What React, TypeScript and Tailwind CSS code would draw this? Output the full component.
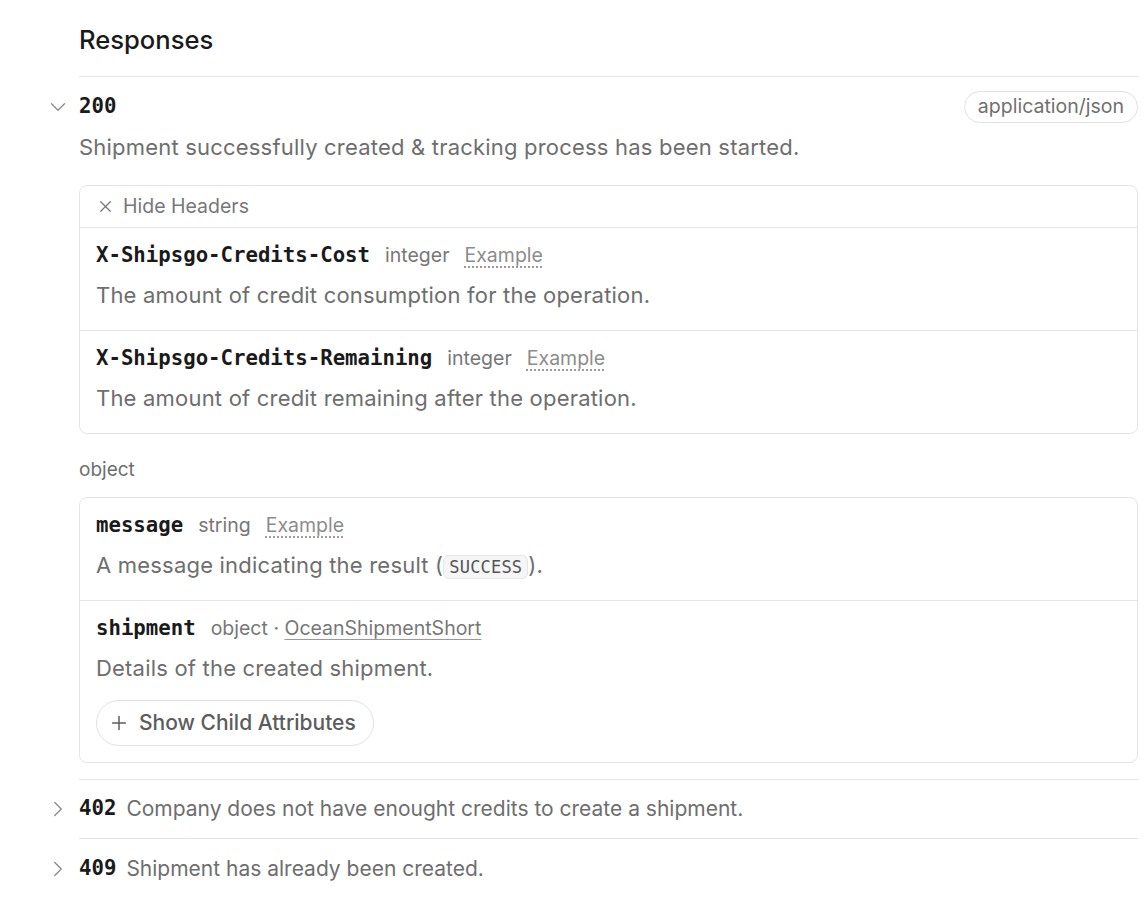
import { ChevronDown, ChevronRight, X, Plus } from "lucide-react";

const sans = "font-['Inter','Liberation_Sans',sans-serif]";
const mono = "font-['DejaVu_Sans_Mono','Liberation_Mono',monospace]";

type Field = {
  name: string;
  type: string;
  desc: React.ReactNode;
  link?: string;
  children?: boolean;
};

const headers: Field[] = [
  {
    name: "X-Shipsgo-Credits-Cost",
    type: "integer",
    desc: "The amount of credit consumption for the operation.",
  },
  {
    name: "X-Shipsgo-Credits-Remaining",
    type: "integer",
    desc: "The amount of credit remaining after the operation.",
  },
];

const body: Field[] = [
  {
    name: "message",
    type: "string",
    desc: (
      <>
        A message indicating the result (
        <code
          className={`${mono} inline-block align-baseline text-[17px] leading-[22px] text-[#555] bg-[#f6f6f6] border border-[#e6e6e6] rounded-md px-[5px]`}
        >
          SUCCESS
        </code>
        ).
      </>
    ),
  },
  {
    name: "shipment",
    type: "object",
    link: "OceanShipmentShort",
    desc: "Details of the created shipment.",
    children: true,
  },
];

function FieldRow({ field, last }: { field: Field; last: boolean }) {
  return (
    <div
      className={`px-4 pt-[14px] ${field.children ? "pb-4" : "pb-[21px]"} ${
        last ? "" : "border-b border-[#e5e5e5]"
      }`}
    >
      <div className="flex items-center gap-[15px] h-[28px]">
        <span className={`${mono} font-bold text-[20.7px] text-[#1a1a1a]`}>{field.name}</span>
        <span className="text-[19.5px] text-[#777]">
          {field.type}
          {field.link && (
            <>
              {" · "}
              <span className="underline underline-offset-4 decoration-[#999]">{field.link}</span>
            </>
          )}
        </span>
        {!field.link && (
          <span className="text-[19.5px] text-[#8c8c8c] underline decoration-dotted underline-offset-4 decoration-[#999]">
            Example
          </span>
        )}
      </div>
      <p className="mt-[11px] text-[22px] tracking-[0.2px] leading-[28px] text-[#6e6e6e]">{field.desc}</p>
      {field.children && (
        <button className="mt-[18px] h-[46px] pl-[11px] pr-[17px] flex items-center gap-[9px] rounded-full border border-[#e2e2e2] text-[21px] font-medium text-[#5c5c5c]">
          <Plus size={22} strokeWidth={1.6} />
          Show Child Attributes
        </button>
      )}
    </div>
  );
}

function Collapsed({ code, text }: { code: string; text: string }) {
  return (
    <div className="relative h-[59px] flex items-center gap-[10px] border-b border-[#e5e5e5] last:border-b-0">
      <ChevronRight size={26} strokeWidth={1.2} className="absolute -left-[34px] text-[#888]" />
      <span className={`${mono} font-bold text-[20.7px] text-[#1a1a1a]`}>{code}</span>
      <span className="text-[21px] text-[#6e6e6e]">{text}</span>
    </div>
  );
}

export default function App() {
  return (
    <div className={`${sans} bg-white min-h-screen pl-[79px] pr-[6px] pt-6`}>
      <h2 className="text-[25.6px] leading-[32px] font-medium text-[#1a1a1a] pb-5 border-b border-[#e5e5e5]">
        Responses
      </h2>

      <div className="pt-[14px] pb-4 border-b border-[#e5e5e5]">
        <div className="relative flex items-center justify-between h-8">
          <ChevronDown size={26} strokeWidth={1.2} className="absolute -left-[34px] text-[#888]" />
          <span className={`${mono} font-bold text-[20.7px] text-[#1a1a1a]`}>200</span>
          <span className="h-8 px-[13px] flex items-center rounded-full border border-[#e2e2e2] text-[19.5px] text-[#707070]">
            application/json
          </span>
        </div>
        <p className="mt-[10px] text-[22px] tracking-[0.2px] leading-[28px] text-[#6e6e6e]">
          Shipment successfully created &amp; tracking process has been started.
        </p>

        <div className="mt-6 rounded-lg border border-[#e5e5e5]">
          <div className="h-[42px] px-4 flex items-center gap-[8px] border-b border-[#e5e5e5] text-[19.5px] text-[#777]">
            <X size={19} strokeWidth={1.5} />
            Hide Headers
          </div>
          {headers.map((f, i) => (
            <FieldRow key={f.name} field={f} last={i === headers.length - 1} />
          ))}
        </div>

        <p className="mt-6 text-[19px] leading-6 text-[#6e6e6e]">object</p>

        <div className="mt-[15px] rounded-lg border border-[#e5e5e5]">
          {body.map((f, i) => (
            <FieldRow key={f.name} field={f} last={i === body.length - 1} />
          ))}
        </div>
      </div>

      <Collapsed code="402" text="Company does not have enought credits to create a shipment." />
      <Collapsed code="409" text="Shipment has already been created." />
    </div>
  );
}
